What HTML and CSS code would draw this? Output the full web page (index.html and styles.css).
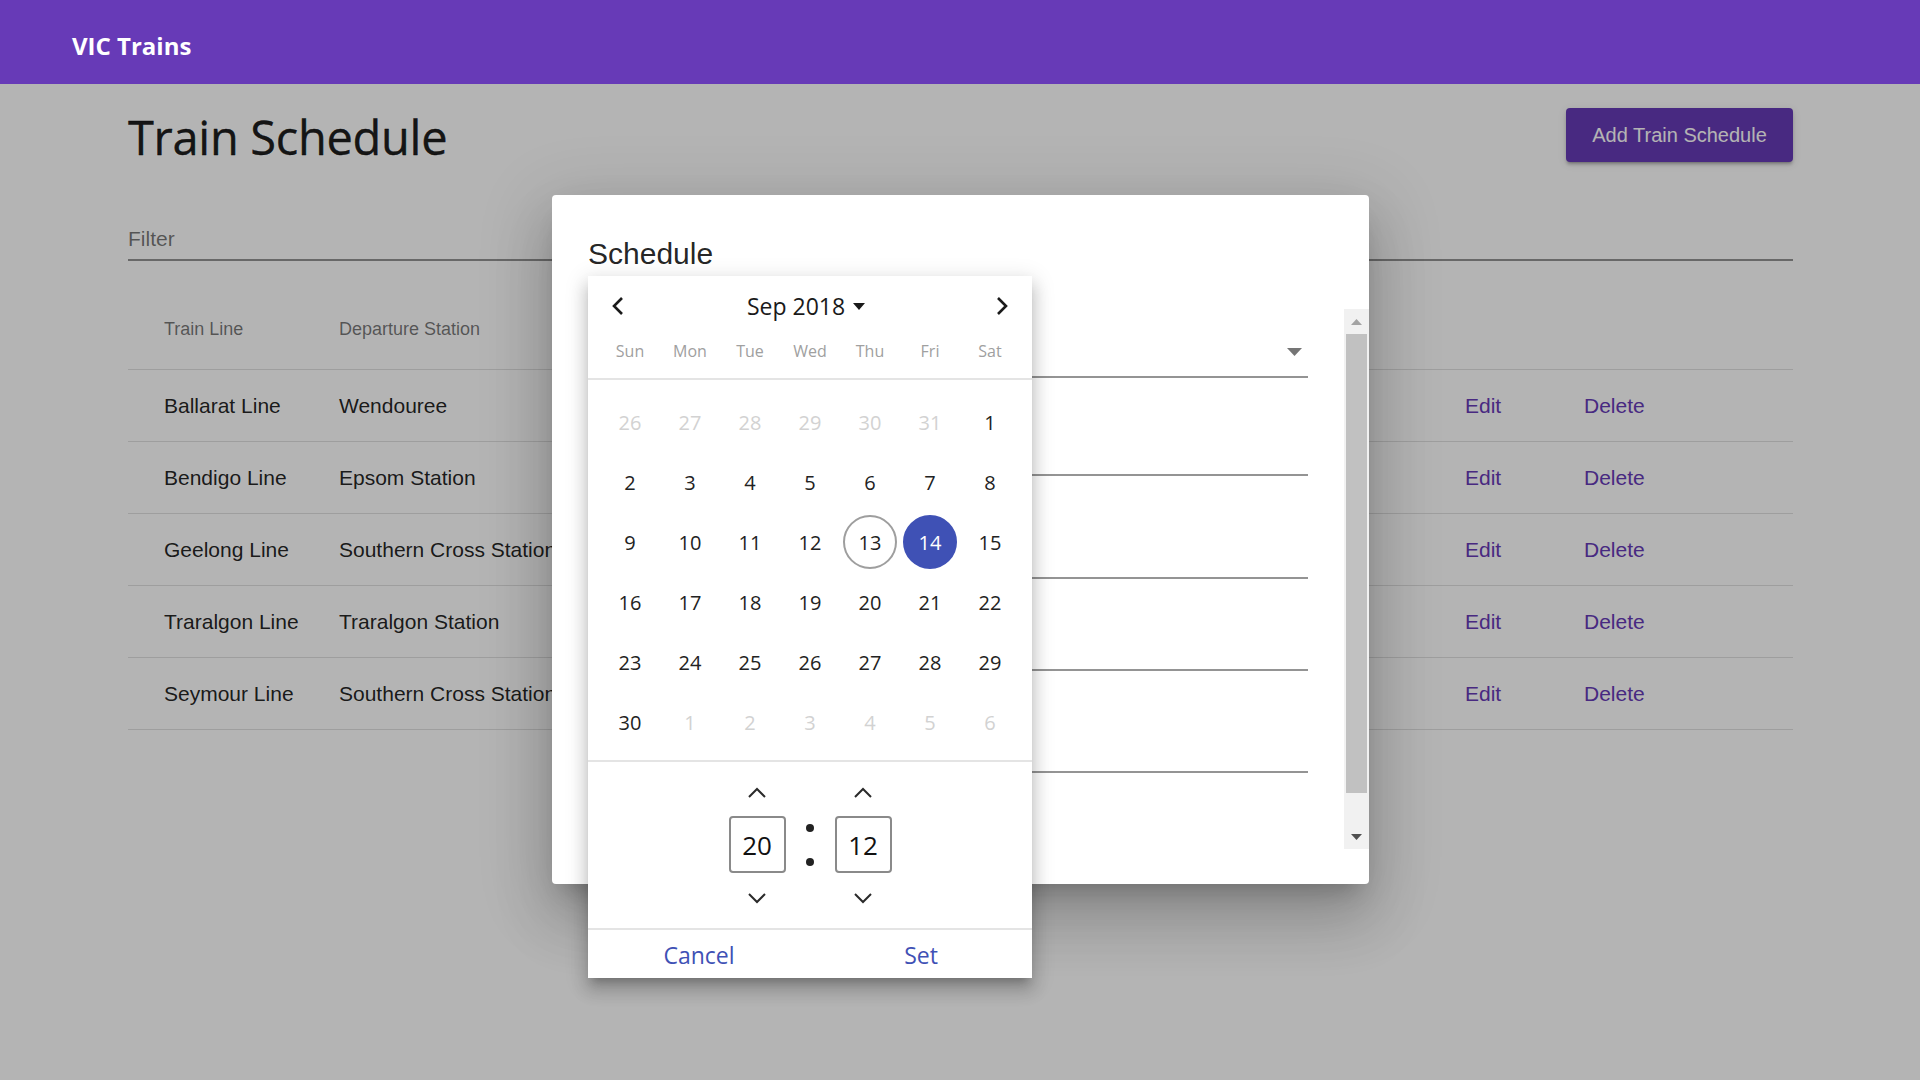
FILE: index.html
```html
<!DOCTYPE html>
<html lang="en">
<head>
<meta charset="utf-8">
<title>VIC Trains</title>
<link rel="stylesheet" href="styles.css">
</head>
<body>
<header class="toolbar"><span class="brand">VIC Trains</span></header>

<main class="page">
  <div class="title-row">
    <h1 class="page-title">Train Schedule</h1>
    <button class="add-btn">Add Train Schedule</button>
  </div>
  <div class="filter"><span class="filter-label">Filter</span></div>
  <div class="table">
    <div class="tr th"><div>Train Line</div><div>Departure Station</div><div></div><div></div></div>
    <div class="tr"><div>Ballarat Line</div><div>Wendouree</div><div class="link">Edit</div><div class="link">Delete</div></div>
    <div class="tr"><div>Bendigo Line</div><div>Epsom Station</div><div class="link">Edit</div><div class="link">Delete</div></div>
    <div class="tr"><div>Geelong Line</div><div>Southern Cross Station</div><div class="link">Edit</div><div class="link">Delete</div></div>
    <div class="tr"><div>Traralgon Line</div><div>Traralgon Station</div><div class="link">Edit</div><div class="link">Delete</div></div>
    <div class="tr"><div>Seymour Line</div><div>Southern Cross Station</div><div class="link">Edit</div><div class="link">Delete</div></div>
  </div>
</main>

<div class="backdrop"></div>

<div class="dialog">
  <h2 class="dialog-title">Schedule</h2>
  <div class="dialog-content">
    <div class="form">
      <div class="field f1"><svg class="select-arrow" width="15" height="8" viewBox="0 0 15 8"><path d="M0 0H15L7.5 8Z" fill="#757575"/></svg></div>
      <div class="field f2"></div>
      <div class="field f3"></div>
      <div class="field f4"></div>
      <div class="field f5"></div>
    </div>
    <div class="scrollbar">
      <div class="sb-btn"><svg width="11" height="6" viewBox="0 0 11 6"><path d="M0 6H11L5.5 0Z" fill="#a3a3a3"/></svg></div>
      <div class="sb-track"><div class="sb-thumb"></div></div>
      <div class="sb-btn"><svg width="11" height="6" viewBox="0 0 11 6"><path d="M0 0H11L5.5 6Z" fill="#505050"/></svg></div>
    </div>
  </div>
</div>

<div class="picker">
  <div class="nav">
    <svg width="14" height="20" viewBox="0 0 14 20"><path d="M11 2L3 10L11 18" fill="none" stroke="#1a1a1a" stroke-width="2.6"/></svg>
    <div class="month">Sep 2018 <svg class="caret" width="12" height="7" viewBox="0 0 12 7"><path d="M0 0H12L6 7Z" fill="#1a1a1a"/></svg></div>
    <svg width="14" height="20" viewBox="0 0 14 20"><path d="M3 2L11 10L3 18" fill="none" stroke="#1a1a1a" stroke-width="2.6"/></svg>
  </div>
  <div class="weekdays"><span>Sun</span><span>Mon</span><span>Tue</span><span>Wed</span><span>Thu</span><span>Fri</span><span>Sat</span></div>
  <div class="days">
    <span class="d out">26</span><span class="d out">27</span><span class="d out">28</span><span class="d out">29</span><span class="d out">30</span><span class="d out">31</span><span class="d">1</span>
    <span class="d">2</span><span class="d">3</span><span class="d">4</span><span class="d">5</span><span class="d">6</span><span class="d">7</span><span class="d">8</span>
    <span class="d">9</span><span class="d">10</span><span class="d">11</span><span class="d">12</span><span class="d today">13</span><span class="d sel">14</span><span class="d">15</span>
    <span class="d">16</span><span class="d">17</span><span class="d">18</span><span class="d">19</span><span class="d">20</span><span class="d">21</span><span class="d">22</span>
    <span class="d">23</span><span class="d">24</span><span class="d">25</span><span class="d">26</span><span class="d">27</span><span class="d">28</span><span class="d">29</span>
    <span class="d">30</span><span class="d out">1</span><span class="d out">2</span><span class="d out">3</span><span class="d out">4</span><span class="d out">5</span><span class="d out">6</span>
  </div>
  <div class="time">
    <div class="tcol">
      <svg class="up" width="20" height="12" viewBox="0 0 20 12"><path d="M2 10L10 2L18 10" fill="none" stroke="#2a2a2a" stroke-width="2"/></svg>
      <div class="tbox">20</div>
      <svg class="down" width="20" height="12" viewBox="0 0 20 12"><path d="M2 2L10 10L18 2" fill="none" stroke="#2a2a2a" stroke-width="2"/></svg>
    </div>
    <div class="colon"><span></span><span></span></div>
    <div class="tcol">
      <svg class="up" width="20" height="12" viewBox="0 0 20 12"><path d="M2 10L10 2L18 10" fill="none" stroke="#2a2a2a" stroke-width="2"/></svg>
      <div class="tbox">12</div>
      <svg class="down" width="20" height="12" viewBox="0 0 20 12"><path d="M2 2L10 10L18 2" fill="none" stroke="#2a2a2a" stroke-width="2"/></svg>
    </div>
  </div>
  <div class="actions"><span>Cancel</span><span>Set</span></div>
</div>
</body>
</html>
```
FILE: styles.css
```css
* { box-sizing: border-box; }
html, body { margin: 0; padding: 0; }
body {
  width: 1920px;
  height: 1080px;
  overflow: hidden;
  background: #ffffff;
  font-family: "Liberation Sans", Arial, sans-serif;
  position: relative;
}

.toolbar {
  position: relative;
  z-index: 40;
  height: 84px;
  background: #673ab7;
  display: flex;
  align-items: center;
  padding-left: 72px;
}
.brand {
  font-family: "Open Sans", sans-serif;
  font-weight: 700;
  font-size: 24px;
  color: #ffffff;
  padding-top: 6px;
}

.page { padding: 0 127px 0 128px; }
.title-row {
  display: flex;
  justify-content: space-between;
  align-items: flex-start;
}
.page-title {
  margin: 22px 0 0 0;
  font-family: "Open Sans", sans-serif;
  font-weight: 400;
  font-size: 47px;
  line-height: 63px;
  color: rgba(0,0,0,0.88);
  letter-spacing: -0.3px;
  -webkit-text-stroke: 0.4px rgba(0,0,0,0.88);
}
.add-btn {
  margin-top: 24px;
  width: 227px;
  height: 54px;
  border: 0;
  border-radius: 4px;
  background: #673ab7;
  color: #ffffff;
  font-family: "Liberation Sans", Arial, sans-serif;
  font-size: 20px;
  box-shadow: 0 3px 2px -2px rgba(0,0,0,.2), 0 3px 3px 0 rgba(0,0,0,.14), 0 2px 8px 0 rgba(0,0,0,.12);
}

.filter {
  margin-top: 58px;
  padding-bottom: 8px;
  border-bottom: 2px solid rgba(0,0,0,0.42);
}
.filter-label {
  display: block;
  font-size: 21px;
  line-height: 24px;
  color: rgba(0,0,0,0.54);
}

.table { margin-top: 25px; }
.tr {
  display: grid;
  grid-template-columns: 175px 1fr 119px 173px;
  align-items: center;
  height: 72px;
  padding: 0 36px;
  border-bottom: 1px solid rgba(0,0,0,0.12);
  font-size: 21px;
  color: rgba(0,0,0,0.87);
  white-space: nowrap;
}
.tr.th {
  height: 84px;
  padding-top: 4px;
  font-size: 18px;
  color: rgba(0,0,0,0.54);
}
.link { color: #673ab7; }

.backdrop {
  position: absolute;
  inset: 0;
  z-index: 10;
  background: rgba(0,0,0,0.295);
}

.dialog {
  position: absolute;
  z-index: 20;
  left: 552px;
  top: 195px;
  width: 817px;
  height: 689px;
  background: #ffffff;
  border-radius: 4px;
  padding-top: 36px;
  box-shadow: 0 16px 22px -10px rgba(0,0,0,.2), 0 36px 57px 4px rgba(0,0,0,.14), 0 14px 69px 12px rgba(0,0,0,.12);
}
.dialog-title {
  margin: 0 0 33px 36px;
  font-family: "Liberation Sans", Arial, sans-serif;
  font-weight: 400;
  font-size: 30px;
  line-height: 45px;
  color: rgba(0,0,0,0.87);
}
.dialog-content {
  display: flex;
  height: 540px;
}
.form { flex: 1; padding: 0 36px; }
.field {
  position: relative;
  border-bottom: 2px solid #949494;
}
.f1 { height: 69px; }
.f2 { height: 98px; }
.f3 { height: 103px; }
.f4 { height: 92px; }
.f5 { height: 102px; }
.select-arrow { position: absolute; right: 6px; top: 39px; }

.scrollbar {
  width: 25px;
  background: #f1f1f1;
  display: flex;
  flex-direction: column;
}
.sb-btn {
  height: 25px;
  display: flex;
  align-items: center;
  justify-content: center;
}
.sb-track { flex: 1; padding: 0 2px; }
.sb-thumb { height: 459px; background: #c1c1c1; }

.picker {
  position: absolute;
  z-index: 30;
  left: 588px;
  top: 276px;
  width: 444px;
  height: 702px;
  background: #ffffff;
  font-family: "Open Sans", sans-serif;
  box-shadow: 0 8px 8px -5px rgba(0,0,0,.2), 0 12px 15px 2px rgba(0,0,0,.14), 0 5px 21px 3px rgba(0,0,0,.12);
}
.nav {
  height: 60px;
  display: flex;
  align-items: center;
  justify-content: space-between;
  padding: 0 23px;
}
.month {
  font-size: 23px;
  color: #1a1a1a;
  display: flex;
  align-items: center;
  gap: 8px;
  margin-right: 8px;
}
.caret { margin-top: 1px; }
.weekdays {
  display: grid;
  grid-template-columns: repeat(7, 60px);
  padding: 0 12px;
  height: 30px;
  margin-bottom: 12px;
  align-items: center;
  justify-items: center;
  font-size: 16px;
  color: #a0a0a0;
}
.days {
  border-top: 2px solid #e4e4e4;
  display: grid;
  grid-template-columns: repeat(7, 60px);
  grid-auto-rows: 60px;
  padding: 12px 12px 8px;
  align-items: center;
  justify-items: center;
}
.d {
  width: 54px;
  height: 54px;
  border-radius: 50%;
  border: 2px solid transparent;
  display: flex;
  align-items: center;
  justify-content: center;
  font-size: 20px;
  color: #222222;
}
.d.out { color: #d2d2d2; }
.d.today { border-color: #9e9e9e; }
.d.sel { background: #3f51b5; color: #ffffff; border-color: #3f51b5; }

.time {
  border-top: 2px solid #e4e4e4;
  height: 168px;
  display: flex;
  justify-content: center;
  padding-top: 19px;
}
.tcol {
  width: 57px;
  display: flex;
  flex-direction: column;
  align-items: center;
}
.tcol .up { margin-top: 6px; }
.tbox {
  margin-top: 17px;
  width: 57px;
  height: 57px;
  border: 2px solid #8a8a8a;
  border-radius: 4px;
  display: flex;
  align-items: center;
  justify-content: center;
  font-size: 26px;
  color: #111111;
}
.tcol .down { margin-top: 19px; }
.colon {
  width: 49px;
  display: flex;
  flex-direction: column;
  align-items: center;
  padding-top: 43px;
  gap: 26px;
}
.colon span {
  width: 8px;
  height: 8px;
  border-radius: 50%;
  background: #222222;
}
.actions {
  border-top: 2px solid #e4e4e4;
  height: 48px;
  padding-top: 3px;
  display: grid;
  grid-template-columns: 1fr 1fr;
  align-items: center;
  justify-items: center;
  font-size: 23px;
  color: #3f51b5;
}
```
